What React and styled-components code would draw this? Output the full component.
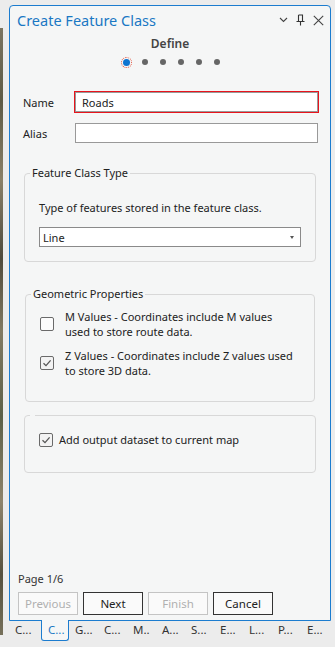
import React from "react";
import styled, { createGlobalStyle } from "styled-components";

const GlobalStyle = createGlobalStyle`
	html, body {
		margin: 0;
		padding: 0;
		background: #ececec;
	}
	body {
		font-family: "Noto Sans", "Open Sans", sans-serif;
		font-size: 11px;
		color: #222;
	}
	* {
		box-sizing: border-box;
	}
`;

const panelBg = "#f5f6f6";
const accent = "#1c7ccf";

const Page = styled.div`
	display: flex;
	align-items: flex-start;
	width: 335px;
	height: 647px;
	padding-top: 5px;
	overflow: hidden;
`;

const MapStrip = styled.div`
	width: 3px;
	height: 607px;
	margin-top: 23px;
	background: linear-gradient(
		180deg,
		#7b7460 0%,
		#5d5a45 12%,
		#8a8068 25%,
		#4f4a3c 38%,
		#827a63 50%,
		#5c6048 64%,
		#8e846c 78%,
		#55503f 90%,
		#76705a 100%
	);
`;

const Window = styled.div`
	display: flex;
	flex-direction: column;
	margin-left: 6px;
`;

const Panel = styled.div`
	width: 322px;
	height: 616px;
	display: flex;
	flex-direction: column;
	background: ${panelBg};
	border: 1px solid ${accent};
	border-radius: 4px 4px 0 0;
`;

const Header = styled.div`
	height: 28px;
	display: flex;
	align-items: center;
	padding: 0 6px 0 7px;
`;

const Title = styled.div`
	flex: 1;
	font-size: 14.5px;
	color: #1a78c4;
`;

const HeaderIcons = styled.div`
	display: flex;
	align-items: center;
	gap: 8px;
`;

const IconBtn = styled.span`
	display: inline-flex;
	align-items: center;
	justify-content: center;
	width: ${(p) => p.$w || 10}px;
	height: 12px;
	color: #444;
`;

const Step = styled.div`
	margin-top: 2px;
	text-align: center;
	font-weight: 600;
	font-size: 12px;
	line-height: 16px;
	color: #444;
`;

const Dots = styled.div`
	margin-top: 5px;
	height: 10px;
	display: flex;
	justify-content: center;
	align-items: center;
	gap: 12px;
	padding-left: 3px;
`;

const Dot = styled.span`
	width: 6px;
	height: 6px;
	border-radius: 50%;
	background: ${(p) => (p.$active ? "#0f74d0" : "#666")};
	${(p) =>
		p.$active &&
		`
		width: 7px;
		height: 7px;
		outline: 1px dotted #e0503c;
		outline-offset: 1.5px;
	`}
`;

const Form = styled.div`
	margin-top: 25px;
	padding: 0 12px 0 13px;
	display: flex;
	flex-direction: column;
	gap: 11px;
`;

const FieldRow = styled.div`
	display: flex;
	align-items: center;
`;

const Label = styled.label`
	width: 52px;
	font-size: 11px;
	color: #222;
`;

const TextInput = styled.input`
	flex: 1;
	height: 20px;
	padding: 0 6px;
	border: 1px solid #999;
	background: #fff;
	font-family: inherit;
	font-size: 11px;
	color: #222;
	outline: ${(p) => (p.$invalid ? "1px solid #e8141c" : "none")};
`;

const Group = styled.fieldset`
	margin: ${(p) => p.$mt}px ${(p) => p.$mx || 14}px 0;
	padding: ${(p) => p.$pt}px 14px ${(p) => p.$pb}px;
	border: 1px solid #d8d8d8;
	border-radius: 4px;
	min-width: 0;
`;

const Legend = styled.legend`
	margin-left: -9px;
	padding: 0 2px;
	font-size: 11px;
	line-height: 16px;
	color: #222;
`;

const EmptyLegend = styled.legend`
	margin-left: -9px;
	padding: 0 2.5px;
	height: 0;
`;

const Text = styled.div`
	font-size: 11px;
	line-height: 16px;
	color: #222;
	white-space: nowrap;
`;

const Select = styled.div`
	margin-top: 11px;
	height: 20px;
	display: flex;
	align-items: center;
	justify-content: space-between;
	padding: 0 6px 0 3px;
	border: 1px solid #8a8a8a;
	background: #fff;
	font-size: 11px;
`;

const Caret = styled.span`
	width: 0;
	height: 0;
	border-left: 2.5px solid transparent;
	border-right: 2.5px solid transparent;
	border-top: 3px solid #555;
`;

const CheckRow = styled.div`
	display: flex;
	align-items: center;
	gap: ${(p) => p.$gap}px;
	margin-top: ${(p) => p.$mt || 0}px;
`;

const Box = styled.span`
	flex: none;
	width: 14px;
	height: 14px;
	border: 1px solid #6a6a6a;
	border-radius: 2px;
	background: ${(p) => (p.$checked ? "#f3f3f3" : "#fcfcfc")};
	display: inline-flex;
	align-items: center;
	justify-content: center;
`;

const CheckText = styled.div`
	font-size: 11px;
	line-height: 15px;
	color: #222;
	white-space: nowrap;
`;

const Footer = styled.div`
	margin-top: auto;
	padding: 0 0 5px 8px;
`;

const PageNum = styled.div`
	font-size: 11px;
	line-height: 16px;
	color: #333;
`;

const Buttons = styled.div`
	margin-top: 5px;
	display: flex;
	gap: 5px;
`;

const Button = styled.button`
	width: 60px;
	height: 23px;
	padding: 0;
	background: #fafafa;
	border: 1px solid ${(p) => (p.disabled ? "#c4c4c4" : "#333")};
	color: ${(p) => (p.disabled ? "#b0b0b0" : "#222")};
	font-family: inherit;
	font-size: 11.5px;
`;

const Tabs = styled.div`
	display: flex;
	align-items: flex-start;
`;

const Tab = styled.div`
	width: ${(p) => (p.$active ? 28 : 29)}px;
	height: 20px;
	padding-left: 6px;
	font-size: 11.5px;
	line-height: 18px;
	color: ${(p) => (p.$active ? "#1a78c4" : "#333")};
	${(p) =>
		p.$active &&
		`
		margin: -1px 0 0 3px;
		height: 21px;
		padding-top: 1px;
		background: ${panelBg};
		border: 1px solid ${accent};
		border-top: none;
		border-radius: 0 0 3px 3px;
	`}
`;

const Check = () => (
	<svg width="10" height="10" viewBox="0 0 10 10">
		<path d="M1.5 5.2 L4 7.6 L8.6 2.4" fill="none" stroke="#555" strokeWidth="1.3" />
	</svg>
);

const tabs = ["C...", "C...", "G...", "C...", "M..", "A...", "S...", "E...", "L...", "P...", "E..."];

export default function App() {
	return (
		<>
			<GlobalStyle />
			<Page>
				<MapStrip />
				<Window>
					<Panel>
						<Header>
							<Title>Create Feature Class</Title>
							<HeaderIcons>
								<IconBtn $w={9}>
									<svg width="9" height="6" viewBox="0 0 9 6">
										<path d="M1 1 L4.5 4.5 L8 1" fill="none" stroke="#444" strokeWidth="1.1" />
									</svg>
								</IconBtn>
								<IconBtn $w={9}>
									<svg width="9" height="12" viewBox="0 0 9 12">
										<path d="M0.5 7.5 H8.5 M2.5 1 H6.5 V7.5 M2.5 1 V7.5 M4.5 7.5 V11.5" fill="none" stroke="#333" strokeWidth="1.1" />
									</svg>
								</IconBtn>
								<IconBtn $w={11}>
									<svg width="11" height="11" viewBox="0 0 11 11">
										<path d="M0.8 0.8 L10.2 10.2 M10.2 0.8 L0.8 10.2" fill="none" stroke="#444" strokeWidth="1.1" />
									</svg>
								</IconBtn>
							</HeaderIcons>
						</Header>

						<Step>Define</Step>
						<Dots>
							<Dot $active />
							<Dot />
							<Dot />
							<Dot />
							<Dot />
							<Dot />
						</Dots>

						<Form>
							<FieldRow>
								<Label>Name</Label>
								<TextInput $invalid defaultValue="Roads" />
							</FieldRow>
							<FieldRow>
								<Label>Alias</Label>
								<TextInput defaultValue="" />
							</FieldRow>
						</Form>

						<Group $mt={22} $pt={19} $pb={14}>
							<Legend>Feature Class Type</Legend>
							<Text>Type of features stored in the feature class.</Text>
							<Select>
								<span>Line</span>
								<Caret />
							</Select>
						</Group>

						<Group $mt={24} $mx={15} $pt={7} $pb={23}>
							<Legend>Geometric Properties</Legend>
							<CheckRow $gap={11}>
								<Box />
								<CheckText>
									M Values - Coordinates include M values
									<br />
									used to store route data.
								</CheckText>
							</CheckRow>
							<CheckRow $gap={11} $mt={9}>
								<Box $checked>
									<Check />
								</Box>
								<CheckText>
									Z Values - Coordinates include Z values used
									<br />
									to store 3D data.
								</CheckText>
							</CheckRow>
						</Group>

						<Group $mt={13} $pt={16} $pb={24}>
							<EmptyLegend />
							<CheckRow $gap={6}>
								<Box $checked>
									<Check />
								</Box>
								<Text>Add output dataset to current map</Text>
							</CheckRow>
						</Group>

						<Footer>
							<PageNum>Page 1/6</PageNum>
							<Buttons>
								<Button disabled>Previous</Button>
								<Button>Next</Button>
								<Button disabled>Finish</Button>
								<Button>Cancel</Button>
							</Buttons>
						</Footer>
					</Panel>
					<Tabs>
						{tabs.map((t, i) => (
							<Tab key={i} $active={i === 1}>
								{t}
							</Tab>
						))}
					</Tabs>
				</Window>
			</Page>
		</>
	);
}
